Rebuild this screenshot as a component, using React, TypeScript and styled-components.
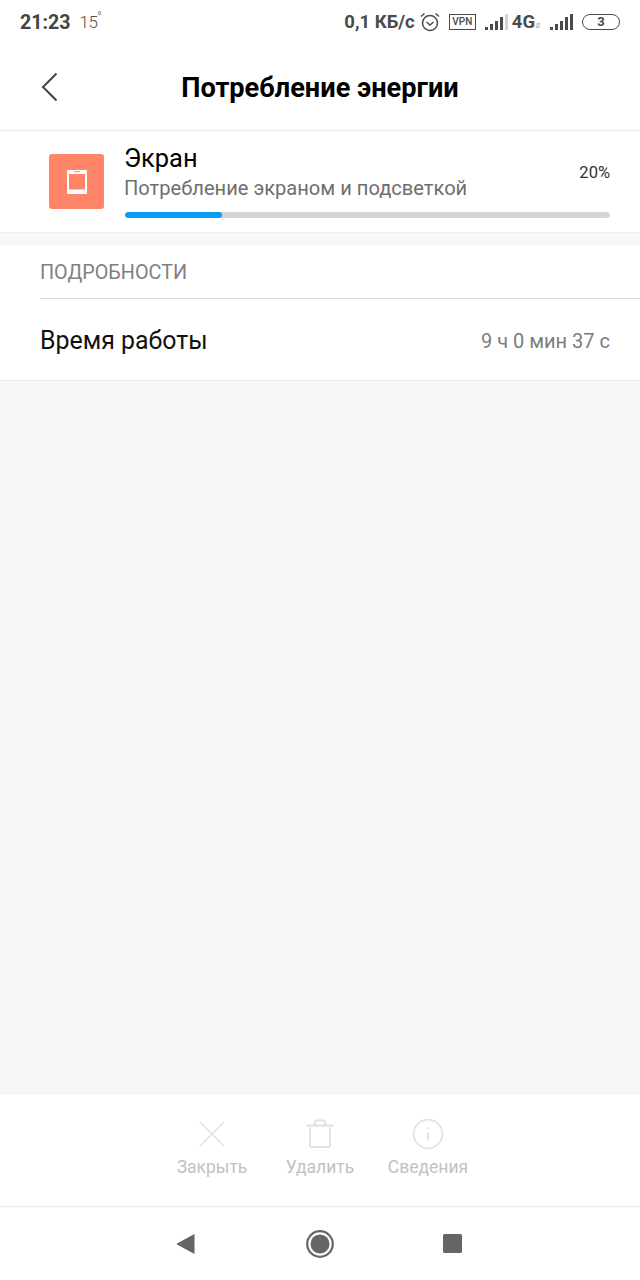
import React from "react";
import styled, { createGlobalStyle } from "styled-components";

const GlobalStyle = createGlobalStyle`
  html, body {
    margin: 0;
    padding: 0;
    background: #f7f7f7;
    font-family: Roboto, "Noto Sans", sans-serif;
  }
`;

const actions = [
  {
    label: "Закрыть",
    icon: (
      <svg width="28" height="28" viewBox="0 0 28 28" fill="none" stroke="#e2e2e2" strokeWidth="1.6">
        <path d="M2 2 L26 26 M26 2 L2 26" />
      </svg>
    ),
  },
  {
    label: "Удалить",
    icon: (
      <svg width="30" height="30" viewBox="0 0 30 30" fill="none" stroke="#e2e2e2" strokeWidth="1.8">
        <path d="M1 6.5 H29 M5 6.5 V26 a2 2 0 0 0 2 2 H23 a2 2 0 0 0 2 -2 V6.5 M10 6.5 V2.5 a1 1 0 0 1 1 -1 H19 a1 1 0 0 1 1 1 V6.5" />
      </svg>
    ),
  },
  {
    label: "Сведения",
    icon: (
      <svg width="32" height="32" viewBox="0 0 32 32" fill="none" stroke="#e2e2e2" strokeWidth="1.7">
        <circle cx="16" cy="16" r="14.4" />
        <path d="M16 14 V22.5" strokeWidth="2" />
        <circle cx="16" cy="10.2" r="1.1" fill="#e2e2e2" stroke="none" />
      </svg>
    ),
  },
];

const Signal = ({ dim }: { dim?: boolean }) => (
  <svg width="23" height="18" viewBox="0 0 23 18" fill="#4a4a4a">
    <rect x="0" y="14" width="3" height="3" />
    <rect x="5" y="11" width="3" height="6" />
    <rect x="10" y="8" width="3" height="9" />
    <rect x="15" y="4" width="3" height="13" />
    <rect x="20" y="1" width="3" height="16" fill={dim ? "#d4d4d4" : "#4a4a4a"} />
  </svg>
);

export default function App() {
  return (
    <Page>
      <GlobalStyle />
      <StatusBar>
        <StatusLeft>
          <Time>21:23</Time>
          <Temp>
            15<Deg>°</Deg>
          </Temp>
        </StatusLeft>
        <StatusRight>
          <Speed>0,1 КБ/с</Speed>
          <svg width="20" height="20" viewBox="0 0 20 20" fill="none" stroke="#4a4a4a" strokeWidth="1.5">
            <circle cx="10" cy="11" r="7.5" />
            <path d="M6.5 10 L10 13 L13.5 10 M1 4.5 L4.5 1.5 M19 4.5 L15.5 1.5" />
          </svg>
          <VpnBox>VPN</VpnBox>
          <Signal dim />
          <NetType>
            4G<NetArrows>⇵</NetArrows>
          </NetType>
          <Signal />
          <Battery>3</Battery>
        </StatusRight>
      </StatusBar>

      <Header>
        <BackButton>
          <svg width="18" height="30" viewBox="0 0 18 30" fill="none" stroke="#444" strokeWidth="2">
            <path d="M15.5 1.5 L2 15 L15.5 28.5" />
          </svg>
        </BackButton>
        <Title>Потребление энергии</Title>
      </Header>

      <UsageCard>
        <ScreenIcon>
          <svg width="20" height="24" viewBox="0 0 20 24">
            <rect x="0" y="0" width="20" height="24" rx="1" fill="#fff" />
            <rect x="2" y="4" width="16" height="15.5" fill="#ff8468" />
            <rect x="7" y="1.2" width="6" height="1" fill="#ff8468" />
          </svg>
        </ScreenIcon>
        <UsageBody>
          <UsageTop>
            <div>
              <UsageName>Экран</UsageName>
              <UsageDesc>Потребление экраном и подсветкой</UsageDesc>
            </div>
            <Percent>20%</Percent>
          </UsageTop>
          <Track>
            <Fill $percent={20} />
          </Track>
        </UsageBody>
      </UsageCard>

      <Details>
        <SectionTitle>ПОДРОБНОСТИ</SectionTitle>
        <DetailRow>
          <DetailLabel>Время работы</DetailLabel>
          <DetailValue>9 ч 0 мин 37 с</DetailValue>
        </DetailRow>
      </Details>

      <Filler />

      <ActionBar>
        {actions.map((a) => (
          <ActionItem key={a.label}>
            <ActionIcon>{a.icon}</ActionIcon>
            <ActionLabel>{a.label}</ActionLabel>
          </ActionItem>
        ))}
      </ActionBar>

      <NavBar>
        <svg width="20" height="22" viewBox="0 0 20 22" fill="#666">
          <path d="M18.5 1.5 V20.5 Q18.5 21 18 20.8 L1 11.5 Q0.5 11 1 10.5 L18 1.2 Q18.5 1 18.5 1.5 Z" />
        </svg>
        <svg width="28" height="28" viewBox="0 0 28 28">
          <circle cx="14" cy="14" r="12.8" fill="none" stroke="#666" strokeWidth="2.2" />
          <circle cx="14" cy="14" r="9.5" fill="#666" />
        </svg>
        <svg width="19" height="19" viewBox="0 0 19 19" fill="#666">
          <rect width="19" height="19" rx="1.5" />
        </svg>
      </NavBar>
    </Page>
  );
}

const Page = styled.div`
  width: 640px;
  height: 1280px;
  display: flex;
  flex-direction: column;
  background: #f7f7f7;
  overflow: hidden;
`;

const StatusBar = styled.div`
  height: 44px;
  padding: 0 20px;
  display: flex;
  justify-content: space-between;
  align-items: center;
  background: #fff;
  color: #4a4a4a;
`;

const StatusLeft = styled.div`
  display: flex;
  align-items: center;
  gap: 9px;
`;

const Time = styled.span`
  font-size: 19.6px;
  font-weight: 700;
  color: #444;
`;

const Temp = styled.span`
  font-size: 17px;
  font-weight: 300;
  color: #555;
  letter-spacing: -0.5px;
`;

const Deg = styled.sup`
  font-size: 12px;
  line-height: 0;
`;

const StatusRight = styled.div`
  display: flex;
  align-items: center;
`;

const Speed = styled.span`
  font-size: 18.5px;
  font-weight: 700;
  margin-right: 5px;
`;

const VpnBox = styled.span`
  box-sizing: border-box;
  width: 27px;
  height: 16px;
  margin: 0 9px;
  border: 1.4px solid #4a4a4a;
  font-size: 10px;
  font-weight: 500;
  line-height: 13px;
  text-align: center;
`;

const NetType = styled.span`
  font-size: 18.5px;
  font-weight: 700;
  margin: 0 9px 0 4px;
  white-space: nowrap;
`;

const NetArrows = styled.span`
  font-size: 7px;
  font-weight: 400;
  color: #999;
`;

const Battery = styled.span`
  box-sizing: border-box;
  width: 38px;
  height: 16px;
  margin-left: 9px;
  border: 1.5px solid #4a4a4a;
  border-radius: 8px;
  font-size: 13px;
  font-weight: 700;
  line-height: 13px;
  text-align: center;
`;

const Header = styled.div`
  position: relative;
  box-sizing: border-box;
  height: 87px;
  padding-top: 2px;
  display: flex;
  align-items: center;
  justify-content: center;
  background: #fff;
  border-bottom: 1px solid #ececec;
`;

const BackButton = styled.div`
  position: absolute;
  left: 41px;
  top: 28px;
  display: flex;
`;

const Title = styled.h1`
  margin: 0;
  font-size: 27.2px;
  font-weight: 700;
  color: #000;
`;

const UsageCard = styled.div`
  box-sizing: border-box;
  height: 102px;
  padding: 0 30px 0 49px;
  display: flex;
  align-items: center;
  gap: 21px;
  background: #fff;
  border-bottom: 1px solid #f0f0f0;
`;

const ScreenIcon = styled.div`
  width: 55px;
  height: 55px;
  flex: none;
  display: flex;
  align-items: center;
  justify-content: center;
  border-radius: 3px;
  background: #ff8468;
`;

const UsageBody = styled.div`
  flex: 1;
  display: flex;
  flex-direction: column;
  margin-top: -2px;
`;

const UsageTop = styled.div`
  margin: -1px 0 0 -1px;
  display: flex;
  justify-content: space-between;
  align-items: center;
`;

const UsageName = styled.div`
  font-size: 25.4px;
  line-height: 30px;
  color: #000;
`;

const UsageDesc = styled.div`
  font-size: 20.1px;
  line-height: 30px;
  color: #6e6e6e;
`;

const Percent = styled.div`
  font-size: 16.5px;
  color: #333;
`;

const Track = styled.div`
  height: 6px;
  margin-top: 9px;
  border-radius: 3px;
  background: #d6d6d6;
  overflow: hidden;
`;

const Fill = styled.div<{ $percent: number }>`
  height: 100%;
  width: ${(p) => p.$percent}%;
  border-radius: 3px;
  background: #0a9bf5;
`;

const Details = styled.div`
  margin-top: 12px;
  background: #fff;
  border-bottom: 1px solid #ececec;
  padding-left: 40px;
`;

const SectionTitle = styled.div`
  box-sizing: border-box;
  height: 54px;
  padding-top: 2px;
  display: flex;
  align-items: center;
  border-bottom: 1px solid #dcdcdc;
  font-size: 19.8px;
  color: #808080;
`;

const DetailRow = styled.div`
  box-sizing: border-box;
  height: 81px;
  padding: 2px 30px 0 0;
  display: flex;
  justify-content: space-between;
  align-items: center;
`;

const DetailLabel = styled.div`
  font-size: 24.9px;
  color: #111;
`;

const DetailValue = styled.div`
  font-size: 20px;
  color: #7c7c7c;
`;

const Filler = styled.div`
  flex: 1;
  background: #f7f7f7;
`;

const ActionBar = styled.div`
  box-sizing: border-box;
  height: 114px;
  padding-left: 158px;
  display: flex;
  background: #fff;
  border-top: 1px solid #f0f0f0;
  border-bottom: 1px solid #ececec;
`;

const ActionItem = styled.div`
  width: 108px;
  display: flex;
  flex-direction: column;
  align-items: center;
  padding-top: 24px;
`;

const ActionIcon = styled.div`
  height: 32px;
  display: flex;
  align-items: center;
  justify-content: center;
`;

const ActionLabel = styled.div`
  margin-top: 5px;
  font-size: 17.5px;
  line-height: 24px;
  color: #c2c2c2;
  white-space: nowrap;
`;

const NavBar = styled.div`
  height: 73px;
  padding: 0 178px 0 176px;
  display: flex;
  justify-content: space-between;
  align-items: center;
  background: #fff;
`;
